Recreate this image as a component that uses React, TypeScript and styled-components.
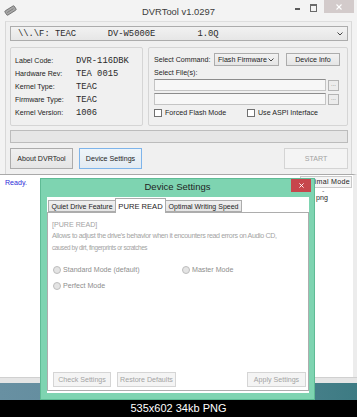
import React from 'react'
import styled, { createGlobalStyle } from 'styled-components'

const UI_FONT = `'Liberation Sans', Arial, sans-serif`
const MONO_FONT = `'Liberation Mono', 'Courier New', monospace`

const GlobalStyle = createGlobalStyle`
  html, body {
    margin: 0;
    padding: 0;
    background: #000;
  }
  body {
    width: 357px;
    height: 417px;
    overflow: hidden;
    font-family: ${UI_FONT};
  }
`

const Chevron: React.FC = () => (
  <svg width="6" height="4" viewBox="0 0 6 4">
    <polyline points="0.5,0.5 3,3 5.5,0.5" fill="none" stroke="#444" strokeWidth="1" />
  </svg>
)

const DriveIcon: React.FC = () => (
  <svg width="13" height="11" viewBox="0 0 13 11">
    <g transform="rotate(-32 6.5 5.5)">
      <rect x="1" y="3" width="11" height="5" rx="1" fill="#a8a8a8" stroke="#5c5c5c" strokeWidth="0.7" />
      <line x1="2.5" y1="5.5" x2="10" y2="5.5" stroke="#6a6a6a" strokeWidth="0.6" />
    </g>
  </svg>
)

const CloseGlyph: React.FC<{ size: number }> = ({ size }) => (
  <svg width={size} height={size} viewBox="0 0 6 6">
    <line x1="0.5" y1="0.5" x2="5.5" y2="5.5" stroke="#fff" strokeWidth="1.1" />
    <line x1="5.5" y1="0.5" x2="0.5" y2="5.5" stroke="#fff" strokeWidth="1.1" />
  </svg>
)

const App: React.FC = () => {
  return (
    <Screen>
      <GlobalStyle />
      <MainWindow>
        <TitleBar>
          <IconSlot>
            <DriveIcon />
          </IconSlot>
          <WindowTitle>DVRTool v1.0297</WindowTitle>
          <Controls>
            <CaptionButton $w={15}>
              <MinGlyph />
            </CaptionButton>
            <CaptionButton $w={17}>
              <MaxGlyph />
            </CaptionButton>
            <CaptionClose>
              <CloseGlyph size={6} />
            </CaptionClose>
          </Controls>
        </TitleBar>

        <Client>
          <DriveSelect>
            <DriveText>{'\\\\.\\F: TEAC      DV-W5000E        1.0Q'}</DriveText>
            <ArrowSlot>
              <Chevron />
            </ArrowSlot>
          </DriveSelect>

          <GroupsRow>
            <InfoGroup>
              <InfoLabel>Label Code:</InfoLabel>
              <InfoValue>DVR-116DBK</InfoValue>
              <InfoLabel>Hardware Rev:</InfoLabel>
              <InfoValue>TEA 0015</InfoValue>
              <InfoLabel>Kernel Type:</InfoLabel>
              <InfoValue>TEAC</InfoValue>
              <InfoLabel>Firmware Type:</InfoLabel>
              <InfoValue>TEAC</InfoValue>
              <InfoLabel>Kernel Version:</InfoLabel>
              <InfoValue>1006</InfoValue>
            </InfoGroup>

            <CommandGroup>
              <CommandRow>
                <CommandLabel>Select Command:</CommandLabel>
                <ComboBox>
                  <span>Flash Firmware</span>
                  <Chevron />
                </ComboBox>
                <SmallButton>Device Info</SmallButton>
              </CommandRow>
              <FilesLabel>Select File(s):</FilesLabel>
              <FileRow $first>
                <FileInput />
                <BrowseButton>...</BrowseButton>
              </FileRow>
              <FileRow>
                <FileInput />
                <BrowseButton>...</BrowseButton>
              </FileRow>
              <CheckRow>
                <CheckItem $width={93}>
                  <CheckBox />
                  Forced Flash Mode
                </CheckItem>
                <CheckItem>
                  <CheckBox />
                  Use ASPI Interface
                </CheckItem>
              </CheckRow>
            </CommandGroup>
          </GroupsRow>

          <ProgressBar />

          <ButtonRow>
            <PushButton $width={63}>About DVRTool</PushButton>
            <PushButton $width={63} $focused>
              Device Settings
            </PushButton>
            <StartButton>START</StartButton>
          </ButtonRow>
        </Client>
      </MainWindow>

      <LogArea>
        <LogHeader>
          <ReadyText>Ready.</ReadyText>
          <ColumnHeader>Optimal Mode</ColumnHeader>
        </LogHeader>
        <LogEntry>
          <Dash>-</Dash>
          <span>png</span>
        </LogEntry>
      </LogArea>
      <BottomFrame />
      <Desktop />
      <CaptionBar>535x602 34kb PNG</CaptionBar>

      <Dialog>
        <DialogTitleBar>
          <span />
          <DialogTitle>Device Settings</DialogTitle>
          <DialogClose>
            <CloseGlyph size={5} />
          </DialogClose>
        </DialogTitleBar>
        <DialogClient>
          <TabStrip>
            <Tab $width={68}>Quiet Drive Feature</Tab>
            <Tab $width={51} $active>
              PURE READ
            </Tab>
            <Tab $width={77}>Optimal Writing Speed</Tab>
          </TabStrip>
          <TabPanel>
            <DisabledLine>[PURE READ]</DisabledLine>
            <DisabledLine $spacing={-0.37}>
              Allows to adjust the drive&apos;s behavior when it encounters read errors on Audio CD,
            </DisabledLine>
            <DisabledLine $spacing={-0.4} $size={6.4}>
              caused by dirt, fingerprints or scratches
            </DisabledLine>
            <RadioGrid>
              <RadioItem>
                <RadioDot />
                Standard Mode (default)
              </RadioItem>
              <RadioItem>
                <RadioDot />
                Master Mode
              </RadioItem>
              <RadioItem>
                <RadioDot />
                Perfect Mode
              </RadioItem>
            </RadioGrid>
            <PanelButtons>
              <DisabledButton $width={58}>Check Settings</DisabledButton>
              <DisabledButton $width={59}>Restore Defaults</DisabledButton>
              <DisabledButton $width={59} $right>
                Apply Settings
              </DisabledButton>
            </PanelButtons>
          </TabPanel>
        </DialogClient>
      </Dialog>
    </Screen>
  )
}

const Screen = styled.div`
  position: relative;
  width: 357px;
  height: 417px;
  display: flex;
  flex-direction: column;
  overflow: hidden;
  font-family: ${UI_FONT};
  font-size: 7.1px;
  color: #1e1e1e;
`

const MainWindow = styled.div`
  background: #f3f3f3;
  display: flex;
  flex-direction: column;
`

const TitleBar = styled.div`
  height: 21px;
  display: grid;
  grid-template-columns: 1fr auto 1fr;
  align-items: center;
`

const IconSlot = styled.div`
  padding-left: 4px;
  display: flex;
  align-items: center;
`

const WindowTitle = styled.div`
  font-size: 9.4px;
  color: #3c3c3c;
  padding-top: 1px;
`

const Controls = styled.div`
  justify-self: end;
  align-self: start;
  display: flex;
  height: 14px;
  margin-right: 3px;
`

const CaptionButton = styled.div<{ $w: number }>`
  width: ${({ $w }) => $w}px;
  height: 14px;
  display: flex;
  align-items: center;
  justify-content: center;
`

const MinGlyph = styled.div`
  width: 5px;
  height: 2px;
  margin-top: 4px;
  background: #5a5a5a;
`

const MaxGlyph = styled.div`
  width: 5px;
  height: 5px;
  margin-top: 1px;
  border: 1px solid #6a6a6a;
  border-top-width: 2px;
`

const CaptionClose = styled.div`
  width: 30px;
  height: 13px;
  margin-left: 2px;
  background: #d3cbcb;
  display: flex;
  align-items: center;
  justify-content: center;
`

const Client = styled.div`
  margin: 0 5px;
  background: #f0f0f0;
  border-top: 1px solid #dedede;
  border-left: 1px solid #d8d8d8;
  border-right: 1px solid #d8d8d8;
  padding: 4px 3px 5px 4px;
  display: flex;
  flex-direction: column;
`

const DriveSelect = styled.div`
  box-sizing: border-box;
  height: 15px;
  border: 1px solid #acacac;
  background: linear-gradient(#f2f2f2, #e6e6e6);
  display: flex;
  align-items: center;
  padding-left: 7px;
`

const DriveText = styled.span`
  font-family: ${MONO_FONT};
  font-size: 8.8px;
  white-space: pre;
  color: #2a2a2a;
`

const ArrowSlot = styled.div`
  margin-left: auto;
  margin-right: 4px;
  display: flex;
`

const GroupsRow = styled.div`
  display: flex;
  gap: 5px;
  margin-top: 6px;
  height: 79px;
`

const GroupBox = styled.div`
  box-sizing: border-box;
  border: 1px solid #d5d5d5;
  border-radius: 2px;
`

const InfoGroup = styled(GroupBox)`
  width: 133px;
  padding: 6px 4px 0 4px;
  display: grid;
  grid-template-columns: 61px 1fr;
  grid-auto-rows: 13px;
  align-items: center;
`

const InfoLabel = styled.span`
  color: #222;
`

const InfoValue = styled.span`
  font-family: ${MONO_FONT};
  font-size: 8.8px;
  color: #2a2a2a;
`

const CommandGroup = styled(GroupBox)`
  flex: 1;
  padding: 5px 5px 0 5px;
  display: flex;
  flex-direction: column;
`

const CommandRow = styled.div`
  height: 13px;
  display: flex;
  align-items: center;
`

const CommandLabel = styled.span`
  width: 60px;
`

const ComboBox = styled.div`
  box-sizing: border-box;
  width: 65px;
  height: 13px;
  border: 1px solid #acacac;
  background: linear-gradient(#f2f2f2, #e5e5e5);
  display: flex;
  align-items: center;
  justify-content: space-between;
  padding: 0 4px 0 3px;
`

const SmallButton = styled.div`
  box-sizing: border-box;
  width: 54px;
  height: 13px;
  margin-left: 7px;
  border: 1px solid #acacac;
  background: linear-gradient(#f2f2f2, #e5e5e5);
  display: flex;
  align-items: center;
  justify-content: center;
`

const FilesLabel = styled.div`
  margin-top: 2px;
  height: 10px;
  line-height: 10px;
`

const FileRow = styled.div<{ $first?: boolean }>`
  margin-top: ${({ $first }) => ($first ? 1 : 2)}px;
  height: 12px;
  display: flex;
  align-items: center;
  gap: 2px;
`

const FileInput = styled.div`
  box-sizing: border-box;
  width: 172px;
  height: 12px;
  border: 1px solid #c4c4c4;
  border-top-color: #8c8c8c;
  background: #f7f7f7;
`

const BrowseButton = styled.div`
  box-sizing: border-box;
  width: 11px;
  height: 11px;
  border: 1px solid #b4b4b4;
  background: #ececec;
  color: #777;
  font-size: 6px;
  line-height: 6px;
  text-align: center;
`

const CheckRow = styled.div`
  margin-top: 4px;
  height: 8px;
  display: flex;
  align-items: center;
`

const CheckItem = styled.div<{ $width?: number }>`
  display: flex;
  align-items: center;
  gap: 3px;
  width: ${({ $width }) => ($width ? `${$width}px` : 'auto')};
`

const CheckBox = styled.div`
  box-sizing: border-box;
  width: 8px;
  height: 8px;
  border: 1px solid #707070;
  background: #fff;
`

const ProgressBar = styled.div`
  box-sizing: border-box;
  margin-top: 4px;
  height: 13px;
  border: 1px solid #bcbcbc;
  background: #e6e6e6;
`

const ButtonRow = styled.div`
  margin-top: 5px;
  height: 21px;
  display: flex;
  gap: 6px;
`

const PushButton = styled.div<{ $width: number; $focused?: boolean }>`
  box-sizing: border-box;
  width: ${({ $width }) => $width}px;
  height: 21px;
  border: 1px solid ${({ $focused }) => ($focused ? '#7eb4ea' : '#acacac')};
  background: ${({ $focused }) =>
    $focused ? 'linear-gradient(#eef4f9, #e3ebf2)' : 'linear-gradient(#f0f0f0, #e5e5e5)'};
  display: flex;
  align-items: center;
  justify-content: center;
`

const StartButton = styled.div`
  box-sizing: border-box;
  margin-left: auto;
  width: 64px;
  height: 21px;
  border: 1px solid #d4d4d4;
  background: #f4f4f4;
  color: #a3a3a3;
  display: flex;
  align-items: center;
  justify-content: center;
`

const LogArea = styled.div`
  flex: 1;
  background: #fff;
  border-top: 1px solid #a9a9a9;
  border-right: 4px solid #ececec;
  padding: 1px 1px 0 5px;
`

const LogHeader = styled.div`
  display: flex;
  align-items: flex-start;
`

const ReadyText = styled.span`
  margin-top: 3px;
  color: #2d2dd8;
`

const ColumnHeader = styled.div`
  box-sizing: border-box;
  margin-left: auto;
  width: 52px;
  height: 12px;
  border: 1px solid #c9c9c9;
  background: #f5f5f5;
  padding-right: 1px;
  line-height: 10px;
  letter-spacing: 0.3px;
  white-space: nowrap;
  text-align: right;
`

const LogEntry = styled.div`
  margin-left: 311px;
  display: flex;
  flex-direction: column;
  line-height: 7px;
`

const Dash = styled.span`
  padding-left: 6px;
  color: #666;
`

const BottomFrame = styled.div`
  height: 6px;
  background: #e5e5e5;
  border-top: 1px solid #d0d0d0;
  box-sizing: border-box;
`

const Desktop = styled.div`
  height: 17px;
  background: linear-gradient(90deg, #6890a2 0%, #5a8898 55%, #3d7b83 100%);
`

const CaptionBar = styled.div`
  height: 17px;
  background: #000;
  color: #fff;
  font-size: 11px;
  line-height: 17px;
  text-align: center;
  position: relative;
  z-index: 2;
`

const Dialog = styled.div`
  position: absolute;
  left: 40px;
  top: 178px;
  width: 275px;
  height: 222px;
  box-sizing: border-box;
  background: #7ed4b1;
  border: 1px solid #5fbb95;
  padding: 0 5px 6px 6px;
  display: flex;
  flex-direction: column;
  z-index: 1;
`

const DialogTitleBar = styled.div`
  height: 18px;
  margin: 0 -5px 0 -6px;
  display: grid;
  grid-template-columns: 1fr auto 1fr;
  align-items: start;
`

const DialogTitle = styled.div`
  font-size: 9.5px;
  line-height: 16px;
  color: #1f1f1f;
`

const DialogClose = styled.div`
  justify-self: end;
  width: 20px;
  height: 13px;
  margin-right: 3px;
  background: #c7464c;
  display: flex;
  align-items: center;
  justify-content: center;
`

const DialogClient = styled.div`
  flex: 1;
  background: #fff;
  display: flex;
  flex-direction: column;
  padding-bottom: 2px;
  min-height: 0;
`

const TabStrip = styled.div`
  height: 15px;
  display: flex;
  align-items: flex-end;
  padding-left: 1px;
`

const Tab = styled.div<{ $width: number; $active?: boolean }>`
  box-sizing: border-box;
  width: ${({ $width }) => $width}px;
  height: ${({ $active }) => ($active ? 15 : 12)}px;
  margin-bottom: ${({ $active }) => ($active ? -1 : 0)}px;
  border: 1px solid #acacac;
  border-bottom: ${({ $active }) => ($active ? 'none' : '1px solid #acacac')};
  margin-right: -1px;
  background: ${({ $active }) => ($active ? '#fff' : 'linear-gradient(#f0f0f0, #e5e5e5)')};
  display: flex;
  align-items: center;
  justify-content: center;
  white-space: nowrap;
  position: relative;
  z-index: ${({ $active }) => ($active ? 1 : 0)};
  font-size: ${({ $active }) => ($active ? 7.6 : 7)}px;
`

const TabPanel = styled.div`
  flex: 1;
  box-sizing: border-box;
  border: 1px solid #adadad;
  padding: 7px 2px 3px 4px;
  display: flex;
  flex-direction: column;
  color: #a3a3a3;
`

const DisabledLine = styled.div<{ $spacing?: number; $size?: number }>`
  line-height: 11px;
  white-space: nowrap;
  letter-spacing: ${({ $spacing }) => $spacing ?? 0}px;
  font-size: ${({ $size }) => ($size ? `${$size}px` : 'inherit')};
`

const RadioGrid = styled.div`
  margin-top: 9px;
  margin-left: 1px;
  display: grid;
  grid-template-columns: 129px 1fr;
  grid-auto-rows: 16px;
  align-items: center;
  color: #8e8e8e;
`

const RadioItem = styled.div`
  display: flex;
  align-items: center;
  gap: 2px;
`

const RadioDot = styled.div`
  box-sizing: border-box;
  width: 8px;
  height: 8px;
  border-radius: 50%;
  border: 1px solid #bdbdbd;
  background: #e4e4e4;
`

const PanelButtons = styled.div`
  margin-top: auto;
  margin-left: 1px;
  display: flex;
  gap: 6px;
`

const DisabledButton = styled.div<{ $width: number; $right?: boolean }>`
  box-sizing: border-box;
  width: ${({ $width }) => $width}px;
  height: 15px;
  margin-left: ${({ $right }) => ($right ? 'auto' : '0')};
  border: 1px solid #d5d5d5;
  background: #f4f4f4;
  color: #a3a3a3;
  display: flex;
  align-items: center;
  justify-content: center;
  white-space: nowrap;
`

export default App
